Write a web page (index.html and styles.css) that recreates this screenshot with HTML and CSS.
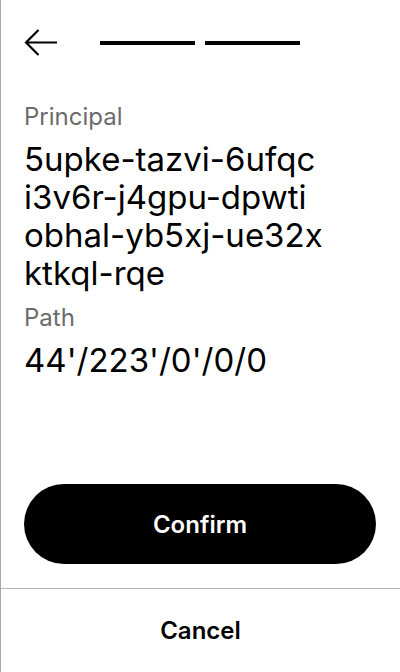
FILE: index.html
```html
<!DOCTYPE html>
<html>
<head>
<meta charset="utf-8">
<link rel="stylesheet" href="styles.css">
</head>
<body>
<div class="screen">
  <div class="header">
    <svg class="back" width="33" height="29" viewBox="0 0 33 29">
      <path d="M33 13.5 H2 M14.5 1 L2 13.5 L14.5 26" fill="none" stroke="#000" stroke-width="2.2"/>
    </svg>
    <div class="bars">
      <span class="bar"></span>
      <span class="bar"></span>
    </div>
  </div>
  <div class="content">
    <div class="label">Principal</div>
    <div class="value">5upke-tazvi-6ufqc<br>i3v6r-j4gpu-dpwti<br>obhal-yb5xj-ue32x<br>ktkql-rqe</div>
    <div class="label">Path</div>
    <div class="value">44'/223'/0'/0/0</div>
  </div>
  <div class="actions">
    <button class="confirm">Confirm</button>
  </div>
  <div class="cancel">Cancel</div>
</div>
</body>
</html>
```
FILE: styles.css
```css
html, body {
  margin: 0;
  padding: 0;
  background: #fff;
}
.screen {
  width: 400px;
  height: 672px;
  box-sizing: border-box;
  border-left: 1px solid #ababab;
  display: flex;
  flex-direction: column;
  font-family: Inter, "Noto Sans", sans-serif;
  color: #000;
}
.header {
  height: 86px;
  display: flex;
  align-items: center;
  padding-left: 23px;
  flex-shrink: 0;
}
.back {
  display: block;
  margin-top: 1px;
}
.bars {
  display: flex;
  gap: 10px;
  margin-left: 43px;
  margin-top: -1px;
}
.bar {
  display: block;
  width: 95px;
  height: 4px;
  background: #000;
}
.content {
  flex: 1;
  padding: 17px 24px 0 23px;
}
.label {
  font-size: 24px;
  line-height: 28px;
  color: #6b6b6b;
  margin-bottom: 9px;
}
.value {
  font-size: 33px;
  line-height: 38px;
  margin-bottom: 12px;
}
.actions {
  padding: 0 24px 24px 23px;
}
.confirm {
  display: block;
  width: 100%;
  height: 80px;
  border: none;
  border-radius: 40px;
  background: #000;
  color: #fff;
  font-family: inherit;
  font-size: 24px;
  font-weight: 600;
}
.cancel {
  height: 83px;
  border-top: 1px solid #b5b5b5;
  display: flex;
  align-items: center;
  justify-content: center;
  font-size: 24px;
  font-weight: 600;
}
```
